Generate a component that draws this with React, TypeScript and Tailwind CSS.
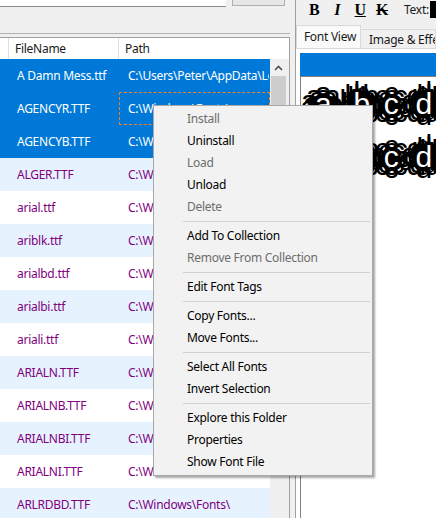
const files = [
  'A Damn Mess.ttf',
  'AGENCYR.TTF',
  'AGENCYB.TTF',
  'ALGER.TTF',
  'arial.ttf',
  'ariblk.ttf',
  'arialbd.ttf',
  'arialbi.ttf',
  'ariali.ttf',
  'ARIALN.TTF',
  'ARIALNB.TTF',
  'ARIALNBI.TTF',
  'ARIALNI.TTF',
  'ARLRDBD.TTF',
];

const menu: ({ label: string; disabled?: boolean } | 'sep')[] = [
  { label: 'Install', disabled: true },
  { label: 'Uninstall' },
  { label: 'Load', disabled: true },
  { label: 'Unload' },
  { label: 'Delete', disabled: true },
  'sep',
  { label: 'Add To Collection' },
  { label: 'Remove From Collection', disabled: true },
  'sep',
  { label: 'Edit Font Tags' },
  'sep',
  { label: 'Copy Fonts...' },
  { label: 'Move Fonts...' },
  'sep',
  { label: 'Select All Fonts' },
  { label: 'Invert Selection' },
  'sep',
  { label: 'Explore this Folder' },
  { label: 'Properties' },
  { label: 'Show Font File' },
];

function FileRow({ name, index }: { name: string; index: number }) {
  const selected = index < 3;
  const tint = selected ? 'bg-[#0078d7] text-white' : index % 2 === 1 ? 'bg-[#e6f3ff] text-[#800080]' : 'bg-white text-[#800080]';
  const path = index === 0 ? 'C:\\Users\\Peter\\AppData\\Local' : 'C:\\Windows\\Fonts\\';
  return (
    <div className={`flex h-[33px] shrink-0 items-center whitespace-nowrap ${tint}`}>
      <div className="w-[119px] shrink-0 pl-[17px]">{name}</div>
      <div
        className={`flex h-full min-w-0 flex-1 items-center overflow-hidden border pl-[8px] ${
          index === 1 ? 'border-dashed border-[#f08020]' : 'border-transparent'
        }`}
      >
        {path}
      </div>
    </div>
  );
}

function FileList() {
  return (
    <div className="flex min-h-0 flex-1 flex-col border-t border-r border-[#a0a0a0] bg-[#f0f0f0]">
      <div className="flex h-[21px] shrink-0 items-center bg-white text-[#1a1a1a]">
        <div className="h-full w-[9px] shrink-0 border-r border-[#e0e0e0]" />
        <div className="w-[109px] shrink-0 pl-[6px]">FileName</div>
        <div className="h-full border-r border-[#e0e0e0]" />
        <div className="pl-[6px]">Path</div>
      </div>
      <div className="flex min-h-0 flex-1">
        <div className="flex w-[270px] shrink-0 flex-col">
          {files.map((name, i) => (
            <FileRow key={name} name={name} index={i} />
          ))}
        </div>
        <div className="ml-[1px] flex w-[15px] flex-col bg-[#f0f0f0]">
          <div className="flex h-[17px] shrink-0 items-center justify-center">
            <svg width="9" height="6" viewBox="0 0 9 6">
              <path d="M1 5 L4.5 1.5 L8 5" fill="none" stroke="#505050" strokeWidth="1.6" />
            </svg>
          </div>
          <div className="h-[120px] bg-[#cdcdcd]" />
        </div>
      </div>
    </div>
  );
}

function PreviewRow() {
  const blob =
    "[text-shadow:0_0_3px_#000,0_-4px_0_#000,0_4px_0_#000,-4px_0_0_#000,4px_0_0_#000,-3px_-3px_0_#000,3px_-3px_0_#000,-3px_3px_0_#000,3px_3px_0_#000,0_-8px_0_#000,0_8px_0_#000,-8px_0_0_#000,8px_0_0_#000,-6px_-6px_0_#000,6px_-6px_0_#000,-6px_6px_0_#000,6px_6px_0_#000,-12px_0_0_#000,12px_0_0_#000,0_-11px_0_#000,0_11px_0_#000,-9px_-8px_0_#000,9px_-8px_0_#000,-9px_8px_0_#000,9px_8px_0_#000,-14px_-3px_0_#000,14px_3px_0_#000]";
  const letter = `text-[30px] leading-none text-white ${blob}`;
  return (
    <div className="flex h-[53px] shrink-0 items-center pl-[14px] [font-family:'Liberation_Sans',sans-serif]">
      <span className={letter}>a</span>
      <span className={`ml-[22px] ${letter}`}>b</span>
      <span className={`ml-[14px] ${letter}`}>c</span>
      <span className={`ml-[17px] ${letter}`}>d</span>
    </div>
  );
}

function RightPanel() {
  return (
    <div className="flex min-w-0 flex-1 flex-col">
      <div className="flex h-[26px] shrink-0 items-center whitespace-nowrap pb-[7px] pl-[13px]">
        <span className="w-[26px] text-[16px] font-bold text-black [font-family:'Liberation_Serif',serif]">B</span>
        <span className="w-[21px] text-[16px] font-bold italic text-black [font-family:'Liberation_Serif',serif]">I</span>
        <span className="w-[22px] text-[16px] font-bold text-black underline [font-family:'Liberation_Serif',serif]">U</span>
        <span className="w-[29px] text-[16px] font-bold text-black line-through [font-family:'Liberation_Serif',serif]">K</span>
        <span className="w-[27px] text-[#1a1a1a]">Text:</span>
        <span className="h-[17px] w-[6px] bg-black" />
      </div>
      <div className="flex h-[23px] shrink-0 items-end border-b border-[#d9d9d9] whitespace-nowrap">
        <div className="flex h-[23px] w-[65px] items-center justify-center border-x border-t border-[#d9d9d9] bg-[#fafafa] pl-[3px] text-[#1a1a1a]">
          Font View
        </div>
        <div className="flex h-[19px] flex-1 items-center overflow-hidden border-t border-r border-[#d9d9d9] bg-[#f0f0f0] pl-[8px] pt-[1px] text-[#1a1a1a]">
          Image &amp; Effects
        </div>
      </div>
      <div className="flex min-h-0 flex-1 flex-col bg-white pt-[4px] pl-[4px]">
        <div className="h-[23px] shrink-0 bg-[#0078d7]" />
        <div className="flex min-h-0 flex-1 flex-col overflow-hidden border-t border-l border-[#808080] bg-white">
          <PreviewRow />
          <PreviewRow />
        </div>
      </div>
    </div>
  );
}

export default function App() {
  return (
    <div
      className="relative flex h-[518px] w-[436px] overflow-hidden bg-[#f0f0f0] text-[12px] tracking-[-0.27px]"
      style={{ fontFamily: '"Noto Sans", sans-serif' }}
    >
      <div className="flex w-[290px] shrink-0 flex-col">
        <div className="flex h-[7px] shrink-0 items-stretch">
          <div className="w-[226px] border-b border-[#8a8a8a] bg-white" />
          <div className="ml-[6px] h-[6px] w-[53px] border border-t-0 border-[#adadad] bg-[#e6e6e6]" />
        </div>
        <div className="h-[26px] shrink-0" />
        <div className="h-[4px] shrink-0 border-t border-[#b0b0b0]" />
        <FileList />
      </div>
      <div className="w-[6px] shrink-0 border-r border-[#a0a0a0]" />
      <RightPanel />

      {/* Context menu */}
      <div className="absolute top-[105px] left-[153px] flex w-[220px] flex-col border border-[#a8a8a8] bg-[#f2f2f2] py-[2px] shadow-[2px_2px_2px_rgba(0,0,0,0.35)]">
        {menu.map((item, i) =>
          item === 'sep' ? (
            <div key={i} className="my-[3px] ml-[29px] mr-[2px] h-px shrink-0 bg-[#d2d2d2]" />
          ) : (
            <div
              key={i}
              className={`flex h-[22px] shrink-0 items-center pl-[33px] ${item.disabled ? 'text-[#6d6d6d]' : 'text-black'}`}
            >
              {item.label}
            </div>
          ),
        )}
      </div>
    </div>
  );
}
